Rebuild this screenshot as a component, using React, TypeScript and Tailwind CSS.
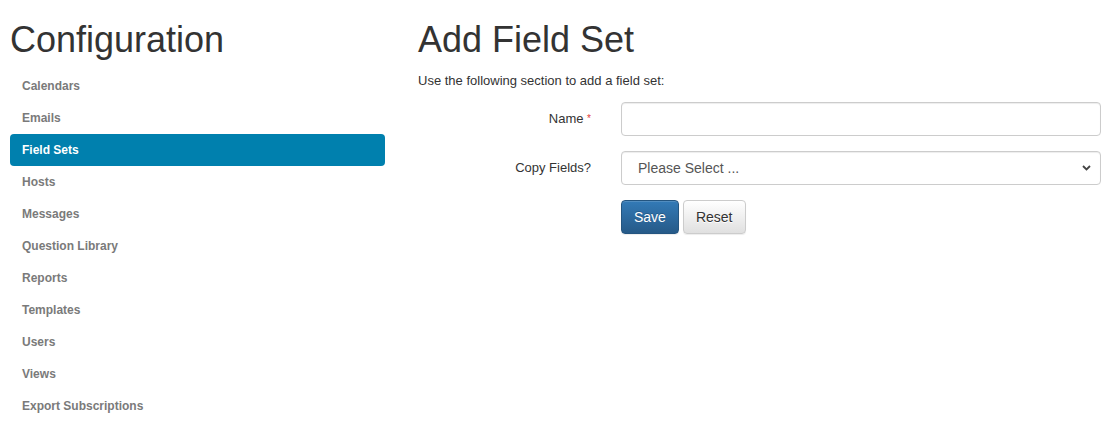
import { useState } from 'react';

const navItems = [
  'Calendars',
  'Emails',
  'Field Sets',
  'Hosts',
  'Messages',
  'Question Library',
  'Reports',
  'Templates',
  'Users',
  'Views',
  'Export Subscriptions',
];

export default function App() {
  const [active, setActive] = useState('Field Sets');
  const [name, setName] = useState('');
  const [copyFrom, setCopyFrom] = useState('');

  return (
    <div className="flex gap-[33px] pl-[10px] pr-[9px] bg-white text-[#333] font-['Liberation_Sans',Arial,sans-serif] min-h-[428px]">
      {/* Sidebar */}
      <div className="w-[375px] shrink-0">
        <h1 className="mt-[20px] mb-[10px] text-[36px] leading-[40px] font-medium">Configuration</h1>
        <ul className="flex flex-col">
          {navItems.map((item) => (
            <li key={item}>
              <a
                href="#"
                onClick={(e) => {
                  e.preventDefault();
                  setActive(item);
                }}
                className={`block px-[12px] py-[6px] rounded-[4px] text-[12px] leading-[20px] font-bold ${
                  active === item ? 'bg-[#0080ae] text-white' : 'text-[#7a7a7a] hover:bg-[#eee]'
                }`}
              >
                {item}
              </a>
            </li>
          ))}
        </ul>
      </div>

      {/* Main */}
      <div className="flex-1">
        <h1 className="mt-[20px] mb-[11px] text-[36px] leading-[40px] font-medium">Add Field Set</h1>
        <p className="mb-[12px] text-[13px] leading-[19px]">Use the following section to add a field set:</p>

        <form className="flex flex-col gap-[15px]" onSubmit={(e) => e.preventDefault()}>
          <div className="grid grid-cols-[173px_1fr] gap-x-[30px] items-center">
            <label className="text-right text-[13px] leading-[18px]">
              Name <span className="text-[#e23b3b] text-[10px] align-top">*</span>
            </label>
            <input
              value={name}
              onChange={(e) => setName(e.target.value)}
              className="h-[34px] w-full px-[12px] border border-[#ccc] rounded-[4px] text-[14px] text-[#555] shadow-[inset_0_1px_1px_rgba(0,0,0,0.075)] outline-none focus:border-[#66afe9]"
            />
          </div>

          <div className="grid grid-cols-[173px_1fr] gap-x-[30px] items-center">
            <label className="text-right text-[13px] leading-[18px]">Copy Fields?</label>
            <div className="relative">
              <select
                value={copyFrom}
                onChange={(e) => setCopyFrom(e.target.value)}
                className="appearance-none h-[34px] w-full pl-[16px] pr-[30px] border border-[#ccc] rounded-[4px] bg-white text-[14px] text-[#555] shadow-[inset_0_1px_1px_rgba(0,0,0,0.075)] outline-none"
              >
                <option value="">Please Select ...</option>
              </select>
              <svg
                className="absolute right-[10px] top-[14px] pointer-events-none"
                width="9"
                height="6"
                viewBox="0 0 9 6"
              >
                <path d="M1 1l3.5 3.5L8 1" fill="none" stroke="#444" strokeWidth="1.8" />
              </svg>
            </div>
          </div>

          <div className="grid grid-cols-[173px_1fr] gap-x-[30px]">
            <div />
            <div className="flex gap-[4px]">
              <button
                type="submit"
                className="h-[34px] px-[12px] rounded-[4px] border border-[#245580] bg-gradient-to-b from-[#337ab7] to-[#265a88] text-white text-[14px] [text-shadow:0_-1px_0_rgba(0,0,0,0.2)] shadow-[inset_0_1px_0_rgba(255,255,255,0.15),0_1px_1px_rgba(0,0,0,0.075)]"
              >
                Save
              </button>
              <button
                type="button"
                onClick={() => {
                  setName('');
                  setCopyFrom('');
                }}
                className="h-[34px] px-[12px] rounded-[4px] border border-[#ccc] bg-gradient-to-b from-white to-[#e0e0e0] text-[#333] text-[14px] [text-shadow:0_1px_0_#fff] shadow-[inset_0_1px_0_rgba(255,255,255,0.15),0_1px_1px_rgba(0,0,0,0.075)]"
              >
                Reset
              </button>
            </div>
          </div>
        </form>
      </div>
    </div>
  );
}
